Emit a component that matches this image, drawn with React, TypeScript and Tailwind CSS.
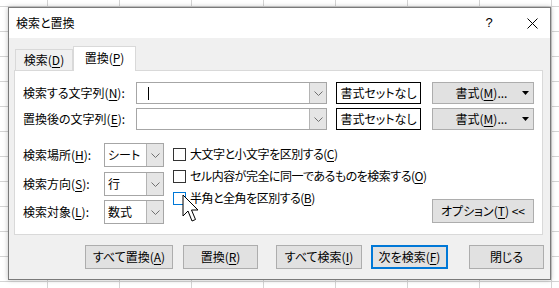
import React from "react";

const U = ({ children }: { children: React.ReactNode }) => (
  <span className="underline underline-offset-[2px] decoration-[1px]">{children}</span>
);

function Chevron() {
  return (
    <svg width="9" height="5" viewBox="0 0 9 5">
      <path d="M0.5 0.5 L4.5 4.5 L8.5 0.5" fill="none" stroke="#707070" strokeWidth="1" />
    </svg>
  );
}

function Combo({ caret }: { caret?: boolean }) {
  return (
    <div className="w-[191px] h-[22px] border border-[#a6a6a6] bg-white flex">
      <div className="flex-1 flex items-center">
        {caret && <div className="ml-[11px] w-px h-[13px] bg-black" />}
      </div>
      <div className="w-[17px] h-full bg-[#e5e5e5] border-l border-[#b4b4b4] flex items-center justify-center">
        <Chevron />
      </div>
    </div>
  );
}

function Select({ value }: { value: string }) {
  return (
    <div className="w-[60px] h-[24px] border border-[#a6a6a6] bg-white flex">
      <div className="flex-1 pl-[3px] flex items-center">{value}</div>
      <div className="w-[17px] h-full bg-[#e5e5e5] border-l border-[#b4b4b4] flex items-center justify-center">
        <Chevron />
      </div>
    </div>
  );
}

function Check({ children, hover }: { children: React.ReactNode; hover?: boolean }) {
  return (
    <div className="h-[22px] flex items-center">
      <div
        className={
          hover
            ? "w-[13px] h-[13px] border border-[#0078d7] bg-white"
            : "w-[13px] h-[13px] border border-[#333333] bg-white"
        }
      />
      <div className="ml-[4px] whitespace-nowrap tracking-[-0.5px]">{children}</div>
    </div>
  );
}

function FormatButtons() {
  return (
    <>
      <div className="ml-[9px] w-[85px] h-[22px] border border-black bg-white flex items-center justify-center">
        書式セットなし
      </div>
      <div className="ml-[11px] w-[102px] h-[22px] border border-[#adadad] bg-[#e1e1e1] flex items-center">
        <div className="flex-1 text-center pl-[8px]">
          書式(<U>M</U>)...
        </div>
        <svg className="mr-[4px]" width="7" height="4" viewBox="0 0 7 4">
          <path d="M0 0 L7 0 L3.5 4 Z" fill="#000" />
        </svg>
      </div>
    </>
  );
}

export default function App() {
  return (
    <div className="relative w-[559px] h-[288px] overflow-hidden bg-white bg-[linear-gradient(to_right,#d4d4d4_1px,transparent_1px),linear-gradient(to_bottom,#d4d4d4_1px,transparent_1px)] bg-size-[72px_25px] bg-position-[47px_31px] pt-[7px] pl-[8px] font-['Noto_Sans_CJK_JP','Noto_Sans',sans-serif] text-[12px] leading-[16px] text-black [font-feature-settings:'palt']">
      <div className="w-[543px] h-[273px] border border-[#7a7a7a] bg-[#f0f0f0] shadow-[0_0_5px_rgba(0,0,0,0.25)] flex flex-col">
        {/* Title bar */}
        <div className="h-[30px] bg-white flex items-center pl-[7px]">
          <div className="flex-1">検索と置換</div>
          <div className="w-[12px] text-center text-[13px] font-['Liberation_Sans',sans-serif]">?</div>
          <div className="ml-[32px] mr-[12px] w-[11px] h-[11px] flex items-center justify-center">
            <svg width="11" height="11" viewBox="0 0 11 11">
              <path d="M0.5 0.5 L10.5 10.5 M10.5 0.5 L0.5 10.5" stroke="#000" strokeWidth="1" />
            </svg>
          </div>
        </div>

        {/* Tabs */}
        <div className="pt-[8px] pl-[6px] flex items-end">
          <div className="w-[58px] h-[21px] border border-b-0 border-[#d9d9d9] bg-[#f0f0f0] flex items-center justify-center">
            検索(<U>D</U>)
          </div>
          <div className="relative z-10 -mb-px w-[63px] h-[25px] border border-b-0 border-[#d9d9d9] bg-white flex items-center justify-center pb-[2px]">
            置換(<U>P</U>)
          </div>
        </div>

        {/* Panel */}
        <div className="ml-[5px] w-[529px] h-[165px] border border-[#d9d9d9] bg-white pt-[11px] pl-[8px] flex flex-col">
          <div className="flex items-center h-[22px]">
            <div className="w-[113px]">
              検索する文字列(<U>N</U>):
            </div>
            <Combo caret />
            <FormatButtons />
          </div>
          <div className="mt-[4px] flex items-center h-[22px]">
            <div className="w-[113px]">
              置換後の文字列(<U>E</U>):
            </div>
            <Combo />
            <FormatButtons />
          </div>

          <div className="mt-[13px] flex">
            <div className="flex flex-col">
              <div className="flex items-center h-[24px]">
                <div className="w-[81px]">
                  検索場所(<U>H</U>):
                </div>
                <Select value="シート" />
              </div>
              <div className="mt-[5px] flex items-center h-[24px]">
                <div className="w-[81px]">
                  検索方向(<U>S</U>):
                </div>
                <Select value="行" />
              </div>
              <div className="mt-[4px] flex items-center h-[24px]">
                <div className="w-[81px]">
                  検索対象(<U>L</U>):
                </div>
                <Select value="数式" />
              </div>
            </div>
            <div className="ml-[9px] flex flex-col">
              <Check>
                大文字と小文字を区別する(<U>C</U>)
              </Check>
              <Check>
                セル内容が完全に同一であるものを検索する(<U>O</U>)
              </Check>
              <Check hover>
                半角と全角を区別する(<U>B</U>)
              </Check>
            </div>
            <div className="ml-auto mr-[8px] self-end mb-[1px] w-[102px] h-[24px] border border-[#adadad] bg-[#e1e1e1] flex items-center justify-center">
              オプション(<U>T</U>) &lt;&lt;
            </div>
          </div>
        </div>

        {/* Bottom buttons */}
        <div className="mt-[10px] pl-[76px] flex">
          <div className="w-[88px] h-[24px] border border-[#adadad] bg-[#e1e1e1] flex items-center justify-center">
            すべて置換(<U>A</U>)
          </div>
          <div className="ml-[10px] w-[75px] h-[24px] border border-[#adadad] bg-[#e1e1e1] flex items-center justify-center">
            置換(<U>R</U>)
          </div>
          <div className="ml-[18px] w-[86px] h-[24px] border border-[#adadad] bg-[#e1e1e1] flex items-center justify-center">
            すべて検索(<U>I</U>)
          </div>
          <div className="ml-[9px] w-[77px] h-[24px] border-2 border-[#0078d7] bg-[#e1e1e1] flex items-center justify-center">
            次を検索(<U>F</U>)
          </div>
          <div className="ml-[21px] w-[75px] h-[24px] border border-[#adadad] bg-[#e1e1e1] flex items-center justify-center">
            閉じる
          </div>
        </div>
      </div>

      {/* Mouse cursor */}
      <svg className="absolute left-[182px] top-[194px]" width="17" height="29" viewBox="0 0 17 29">
        <path
          d="M1 1 L1 22 L6 17 L10 27 L13.5 25.5 L9.5 16 L16 16 Z"
          fill="#fff"
          stroke="#000"
          strokeWidth="1"
          strokeLinejoin="miter"
        />
      </svg>
    </div>
  );
}
